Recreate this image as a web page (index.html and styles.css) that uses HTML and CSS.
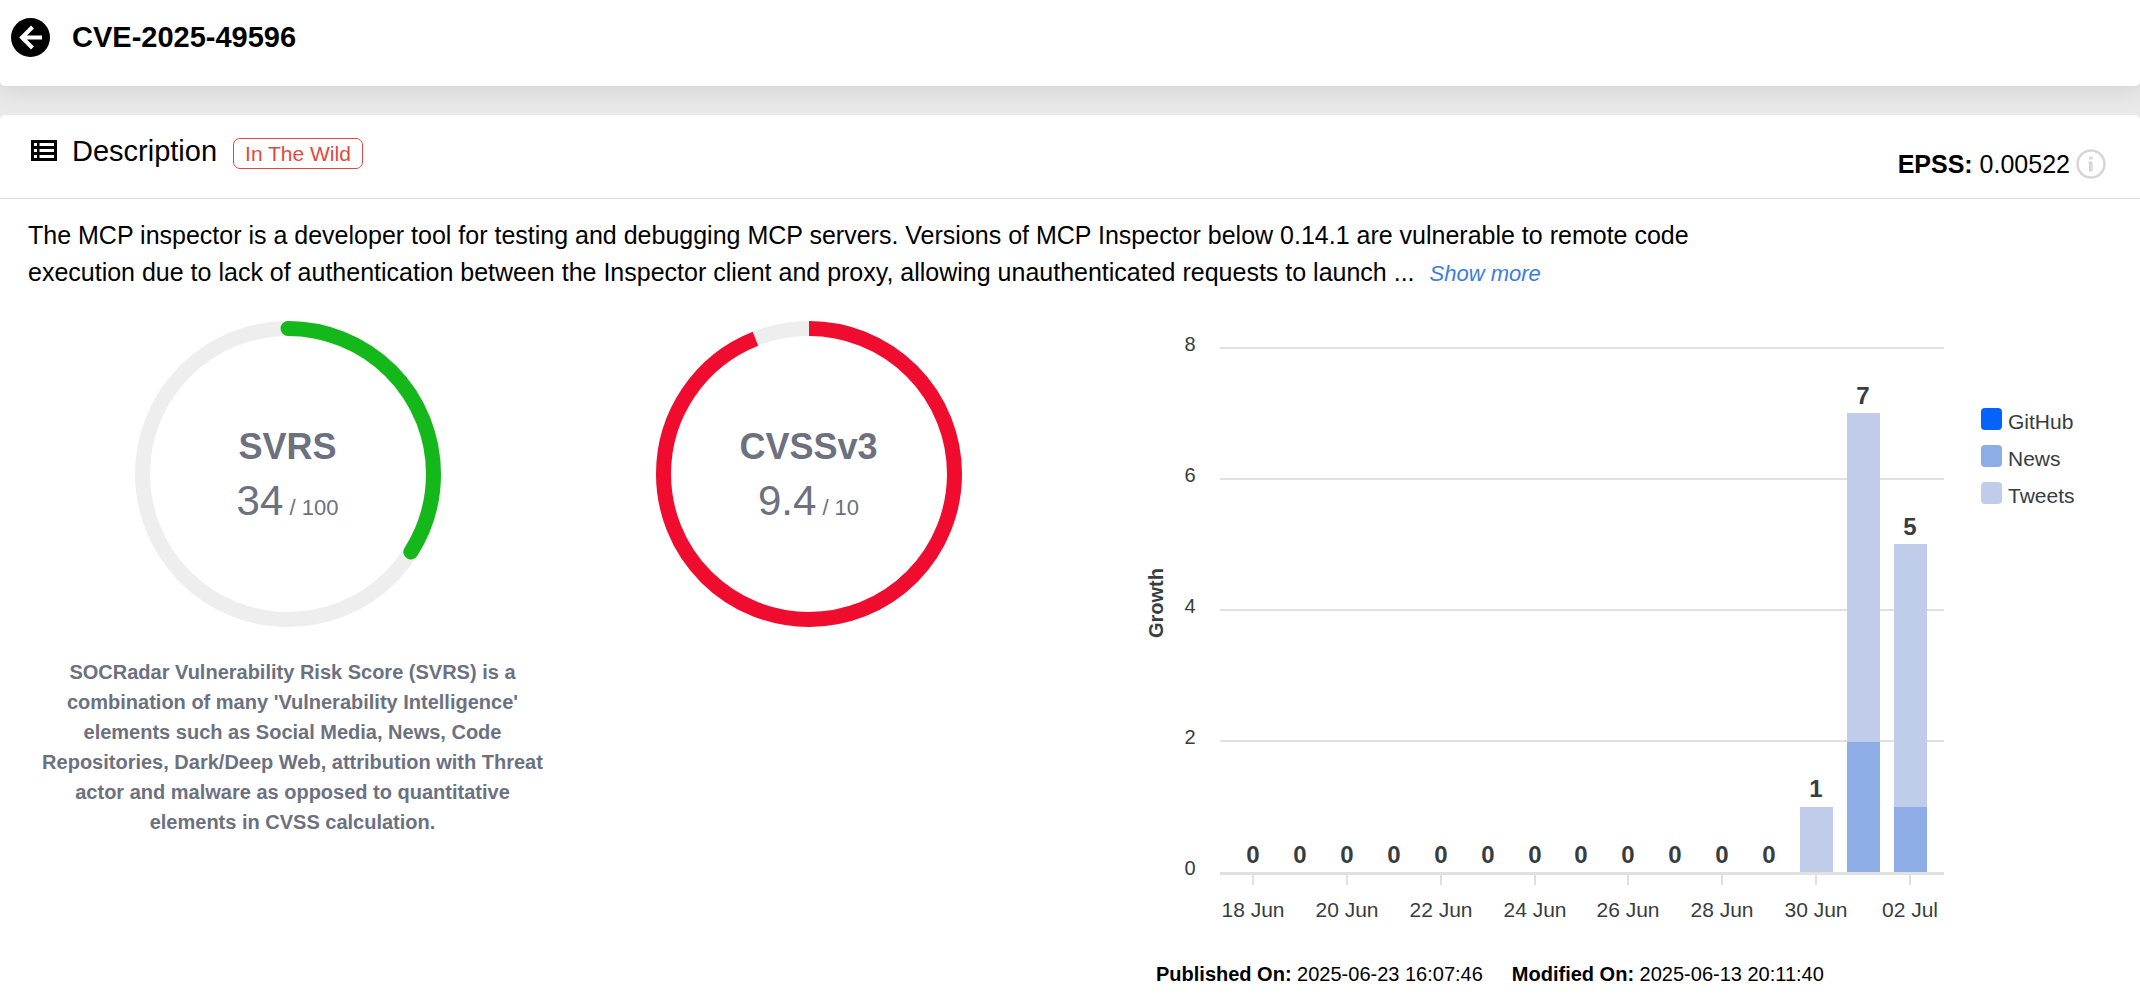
FILE: index.html
```html
<!DOCTYPE html>
<html lang="en">
<head>
<meta charset="utf-8">
<meta name="viewport" content="width=device-width, initial-scale=1">
<title>CVE-2025-49596</title>
<link rel="stylesheet" href="styles.css">
</head>
<body>
<header class="topbar">
  <button class="icon-button" type="button" aria-label="Back">
    <svg width="39" height="39" viewBox="0 0 39 39" aria-hidden="true">
      <circle cx="19.5" cy="19.5" r="19.5" fill="#000"/>
      <path d="M31 19.500H10.500M21.500 9L11 19.500L21.500 30" fill="none" stroke="#fff" stroke-width="4"/>
    </svg>
  </button>
  <h1 class="title">CVE-2025-49596</h1>
</header>

<main class="card">
  <div class="card-head">
    <div class="heading">
      <svg class="list-icon" width="26" height="21" viewBox="0 0 26 21" aria-hidden="true">
        <path fill="#000" fill-rule="evenodd" d="M0 0H26V21H0ZM3 3V6H6V3ZM8.500 3V6H23V3ZM3 9V12H6V9ZM8.500 9V12H23V9ZM3 15V18H6V15ZM8.500 15V18H23V15Z"/>
      </svg>
      <h2 class="heading-text">Description</h2>
      <span class="badge">In The Wild</span>
    </div>
    <div class="epss">
      <span><strong>EPSS:</strong> 0.00522</span>
      <button class="icon-button" type="button" aria-label="About EPSS">
        <svg width="30" height="30" viewBox="0 0 30 30" aria-hidden="true">
          <circle cx="15" cy="15" r="13.500" fill="none" stroke="#d6d6d6" stroke-width="2.500"/>
          <path fill="#d6d6d6" d="M13 7.500H16.500V10.500H13ZM12.500 12.500H16.500V22.500H13V14.500H12.500Z"/>
        </svg>
      </button>
    </div>
  </div>

  <p class="description">The MCP inspector is a developer tool for testing and debugging MCP servers. Versions of MCP Inspector below 0.14.1 are vulnerable to remote code execution due to lack of authentication between the Inspector client and proxy, allowing unauthenticated requests to launch ... <a class="more" href="#">Show more</a></p>

  <div class="metrics">
    <section class="metric">
      <div class="gauge">
        <svg class="ring" viewBox="0 0 306 306" aria-hidden="true">
          <circle cx="153" cy="153" r="145.500" fill="none" stroke="#eee" stroke-width="15"/>
          <circle cx="153" cy="153" r="145.500" fill="none" stroke="#14b81b" stroke-width="15" stroke-linecap="round" pathLength="100" stroke-dasharray="34 66" transform="rotate(-90 153 153)"/>
        </svg>
        <div class="reading">
          <h3 class="reading-name">SVRS</h3>
          <div class="reading-value">34<span class="reading-max"> / 100</span></div>
        </div>
      </div>
      <p class="note">SOCRadar Vulnerability Risk Score (SVRS) is a combination of many 'Vulnerability Intelligence' elements such as Social Media, News, Code Repositories, Dark/Deep Web, attribution with Threat actor and malware as opposed to quantitative elements in CVSS calculation.</p>
    </section>

    <section class="metric">
      <div class="gauge">
        <svg class="ring" viewBox="0 0 306 306" aria-hidden="true">
          <circle cx="153" cy="153" r="145.500" fill="none" stroke="#eee" stroke-width="15"/>
          <circle cx="153" cy="153" r="145.500" fill="none" stroke="#ef0c2e" stroke-width="15" pathLength="100" stroke-dasharray="94 6" transform="rotate(-90 153 153)"/>
        </svg>
        <div class="reading">
          <h3 class="reading-name">CVSSv3</h3>
          <div class="reading-value">9.4<span class="reading-max"> / 10</span></div>
        </div>
      </div>
    </section>

    <section class="trend">
      <div class="trend-row">
        <svg class="chart" viewBox="0 0 820 620" role="img" aria-label="Growth of mentions per day">
          <g class="grid">
            <path d="M80 27H804M80 158H804M80 289H804M80 420H804"/>
          </g>
          <g class="tweets">
            <rect x="660" y="486" width="33" height="65"/>
            <rect x="707" y="92" width="33" height="329"/>
            <rect x="754" y="223" width="33" height="263"/>
          </g>
          <g class="news">
            <rect x="707" y="421" width="33" height="130"/>
            <rect x="754" y="486" width="33" height="65"/>
          </g>
          <path class="axis" d="M80 552.500H804"/>
          <path class="ticks" d="M113 554V564M207 554V564M301 554V564M395 554V564M488 554V564M582 554V564M676 554V564M770 554V564"/>
          <g class="y-labels">
            <text x="50" y="30">8</text>
            <text x="50" y="161">6</text>
            <text x="50" y="292">4</text>
            <text x="50" y="423">2</text>
            <text x="50" y="554">0</text>
          </g>
          <text class="y-title" transform="translate(23 282) rotate(-90)">Growth</text>
          <g class="totals">
            <text x="113" y="542">0</text>
            <text x="160" y="542">0</text>
            <text x="207" y="542">0</text>
            <text x="254" y="542">0</text>
            <text x="301" y="542">0</text>
            <text x="348" y="542">0</text>
            <text x="395" y="542">0</text>
            <text x="441" y="542">0</text>
            <text x="488" y="542">0</text>
            <text x="535" y="542">0</text>
            <text x="582" y="542">0</text>
            <text x="629" y="542">0</text>
            <text x="676" y="476">1</text>
            <text x="723" y="83">7</text>
            <text x="770" y="214">5</text>
          </g>
          <g class="x-labels">
            <text x="113" y="596">18 Jun</text>
            <text x="207" y="596">20 Jun</text>
            <text x="301" y="596">22 Jun</text>
            <text x="395" y="596">24 Jun</text>
            <text x="488" y="596">26 Jun</text>
            <text x="582" y="596">28 Jun</text>
            <text x="676" y="596">30 Jun</text>
            <text x="770" y="596">02 Jul</text>
          </g>
        </svg>
        <ul class="legend">
          <li class="legend-item"><span class="swatch swatch-github"></span>GitHub</li>
          <li class="legend-item"><span class="swatch swatch-news"></span>News</li>
          <li class="legend-item"><span class="swatch swatch-tweets"></span>Tweets</li>
        </ul>
      </div>
      <div class="dates">
        <span><strong>Published On:</strong> 2025-06-23 16:07:46</span>
        <span><strong>Modified On:</strong> 2025-06-13 20:11:40</span>
      </div>
    </section>
  </div>
</main>
</body>
</html>
```
FILE: styles.css
```css
* {
  box-sizing: border-box;
}

body {
  margin: 0;
  min-height: 100vh;
  display: flex;
  flex-direction: column;
  gap: 29px;
  background: #e9e9e9;
  color: #000;
  font-family: "Liberation Sans", Arial, Helvetica, sans-serif;
  font-size: 25px;
}

h1, h2, h3, p, ul {
  margin: 0;
  padding: 0;
}

.icon-button {
  display: flex;
  padding: 0;
  border: 0;
  background: none;
  cursor: pointer;
}

.topbar {
  display: flex;
  align-items: center;
  gap: 22px;
  padding: 18px 11px 29px;
  background: #fff;
  border-radius: 0 0 5px 5px;
  box-shadow: 0 4px 24px rgba(0, 0, 0, 0.1);
}

.title {
  font-size: 29px;
  line-height: 39px;
}

.card {
  flex: 1;
  position: relative;
  background: #fff;
  border-radius: 5px 5px 0 0;
}

.card-head {
  display: flex;
  justify-content: space-between;
  align-items: flex-start;
  padding: 20px 34px 19px 31px;
  border-bottom: 1px solid #dedede;
}

.heading {
  display: flex;
  align-items: baseline;
}

.list-icon {
  margin-right: 15px;
}

.heading-text {
  margin-right: 16px;
  font-size: 29px;
  font-weight: 400;
  line-height: 32px;
}

.badge {
  padding: 0 11px;
  border: 1px solid #e2483d;
  border-radius: 7px;
  color: #e2483d;
  font-size: 21px;
  line-height: 29px;
}

.epss {
  display: flex;
  align-items: center;
  gap: 6px;
  padding-top: 14px;
  line-height: 24px;
}

.description {
  max-width: 82%;
  padding: 18px 0 0 28px;
  line-height: 37px;
}

.more {
  margin-left: 8px;
  color: #3b7ddd;
  font-size: 22px;
  font-style: italic;
  text-decoration: none;
}

.metrics {
  display: grid;
  grid-template-columns: 521fr 521fr 1071fr;
  padding: 29px 0 0 27px;
}

.metric {
  display: flex;
  flex-direction: column;
  align-items: center;
  gap: 30px;
  color: #6c717f;
}

.gauge {
  display: grid;
  place-items: center;
}

.gauge > * {
  grid-area: 1 / 1;
}

.ring {
  width: 306px;
}

.reading {
  padding-top: 6px;
  text-align: center;
}

.reading-name {
  font-size: 36px;
  line-height: 54px;
}

.reading-value {
  font-size: 42px;
  line-height: 54px;
}

.reading-max {
  font-size: 22px;
}

.note {
  max-width: 521px;
  padding-left: 10px;
  font-size: 20px;
  font-weight: 700;
  line-height: 30px;
  text-align: center;
}

.trend {
  padding-left: 71px;
}

.trend-row {
  display: flex;
  gap: 21px;
}

.chart {
  flex: 1;
  min-width: 0;
  fill: #373d3f;
}

.grid,
.axis,
.ticks {
  fill: none;
  stroke: #e0e0e0;
  stroke-width: 2;
}

.axis {
  stroke-width: 3;
}

.tweets {
  fill: #bfcdeb;
}

.news {
  fill: #8eace6;
}

.y-labels,
.y-title {
  font-size: 20px;
  text-anchor: middle;
}

.y-title,
.totals {
  font-weight: 700;
}

.totals {
  font-size: 24px;
  text-anchor: middle;
}

.x-labels {
  font-size: 21px;
  text-anchor: middle;
}

.legend {
  width: 159px;
  padding-top: 87px;
  color: #373d3f;
  font-size: 21px;
  line-height: 28px;
  list-style: none;
}

.legend-item {
  display: flex;
  gap: 6px;
  height: 37px;
}

.swatch {
  width: 21px;
  height: 22px;
  border-radius: 4px;
}

.swatch-github {
  background: #0562fb;
}

.swatch-news {
  background: #8eace6;
}

.swatch-tweets {
  background: #bfcdeb;
}

.dates {
  display: flex;
  flex-wrap: wrap;
  gap: 29px;
  padding: 21px 0 12px 16px;
  font-size: 20px;
  line-height: 24px;
}
```
